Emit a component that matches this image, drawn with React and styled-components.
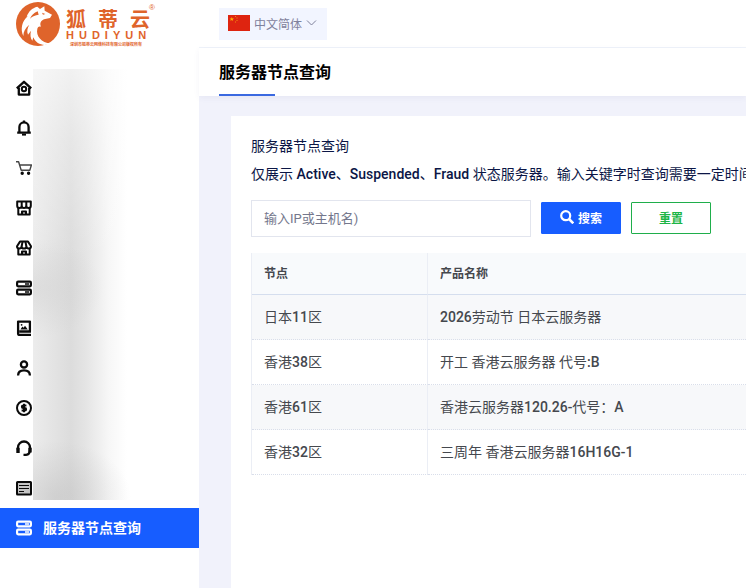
import React from "react";
import styled, { createGlobalStyle } from "styled-components";

const Global = createGlobalStyle`
  * { box-sizing: border-box; }
  body {
    margin: 0;
    background: #f1f2fb;
    font-family: "Roboto Medium", Roboto, "Noto Sans CJK SC", sans-serif;
    font-size: 14px;
    color: #45484e;
    overflow-x: hidden;
  }
  h1, h2, p { margin: 0; }
  button, input { font-family: inherit; }
`;

const Page = styled.div`
  display: grid;
  grid-template-columns: 199px minmax(0, 1fr);
  min-height: 100vh;
`;

const Sidebar = styled.aside`
  background: #fff;
`;

const Brand = styled.a`
  display: flex;
  align-items: flex-start;
  gap: 5px;
  height: 68px;
  padding: 1px 0 0 15px;
  color: #df642b;
  text-decoration: none;
`;

const BrandText = styled.span`
  display: flex;
  flex-direction: column;
  padding-top: 7px;
`;

const BrandName = styled.span`
  font: 700 20px/21px "Noto Sans CJK SC", sans-serif;
  white-space: nowrap;
`;

const Glyph = styled.span`
  &:not(:first-child) { margin-left: ${(p) => p.$gap}px; }
`;

const BrandLatin = styled.span`
  font: 700 11px/12px "Liberation Sans", sans-serif;
  white-space: nowrap;
`;

const BrandNote = styled.span`
  font: 700 4px/6px "Noto Sans CJK SC", sans-serif;
  padding-left: 4px;
  white-space: nowrap;
`;

const Registered = styled.sup`
  font: 400 8px/8px "Liberation Sans", sans-serif;
  margin-left: -6px;
  padding-top: 3px;
`;

const Nav = styled.nav`
  position: relative;
`;

const NavLink = styled.a`
  display: flex;
  align-items: center;
  gap: 11px;
  height: 40px;
  padding: 0 16px;
  font-size: 14px;
  line-height: 20px;
  font-weight: 700;
  text-decoration: none;
  color: ${(p) => (p.$active ? "#fff" : "#0a0a0a")};
  background: ${(p) => (p.$active ? "#175dff" : "transparent")};
`;

const Veil = styled.div`
  position: absolute;
  top: 1px;
  bottom: 48px;
  left: 33px;
  width: 100px;
  background:
    linear-gradient(to bottom, rgba(255, 255, 255, 0.6), rgba(255, 255, 255, 0.3) 70px, rgba(255, 255, 255, 0) 190px),
    radial-gradient(70px 50px at 0 219px, rgba(190, 190, 190, 0.3), rgba(200, 200, 200, 0)),
    radial-gradient(76px 56px at 22px 428px, rgba(180, 180, 180, 0.4), rgba(200, 200, 200, 0)),
    linear-gradient(to right, #ececec, #dcdcdc 38px, #e4e4e4 52px, #f7f7f7 76px, #fff 94px);
`;

const Main = styled.main`
  display: flex;
  flex-direction: column;
  min-width: 0;
`;

const TopBar = styled.header`
  height: 48px;
  padding: 8px 20px;
  background: #fff;
  border-bottom: 1px solid #eff3fa;
`;

const LanguageButton = styled.button`
  display: flex;
  align-items: center;
  gap: 4px;
  height: 32px;
  padding: 0 10px 2px 9px;
  border: 0;
  background: #f2f5ff;
  color: #7f819c;
  font-size: 12px;
`;

const TitleBar = styled.div`
  display: flex;
  height: 48px;
  padding: 0 20px;
  background: #fff;
  box-shadow: 0 2px 6px rgba(60, 70, 130, 0.06);
`;

const PageTitle = styled.h1`
  position: relative;
  font-size: 16px;
  line-height: 50px;
  height: 48px;
  font-weight: 700;
  color: #000;
  &::after {
    content: "";
    position: absolute;
    left: 0;
    bottom: 0;
    width: 50%;
    height: 2px;
    background: #3b69e0;
  }
`;

const Card = styled.section`
  flex: 1;
  margin: 20px 0 0 32px;
  padding: 16px 0 20px 20px;
  background: #fff;
  overflow: hidden;
`;

const Lead = styled.p`
  font-size: 14px;
  font-weight: 400;
  line-height: 28px;
  white-space: nowrap;
  color: #0b1646;
`;

const SearchForm = styled.form`
  display: flex;
  align-items: flex-start;
  gap: 10px;
  padding: 12px 0 16px;
`;

const SearchInput = styled.input`
  width: 280px;
  height: 37px;
  padding: 0 12px;
  border: 1px solid #e2e5ee;
  background: #fff;
  font-family: Roboto, "Noto Sans CJK SC", sans-serif;
  font-size: 13px;
  color: #45484e;
  &::placeholder { color: #74778c; opacity: 1; }
`;

const Button = styled.button`
  display: flex;
  align-items: center;
  justify-content: center;
  gap: 4px;
  width: 80px;
  height: 32px;
  margin-top: 2px;
  padding: 0 0 2px;
  border: 1px solid ${(p) => (p.$primary ? "#175dff" : "#1fae4b")};
  border-radius: 1px;
  background: ${(p) => (p.$primary ? "#175dff" : "#fff")};
  color: ${(p) => (p.$primary ? "#fff" : "#1db546")};
  font-size: 12px;
  font-weight: 700;
`;

const Table = styled.table`
  width: 100%;
  table-layout: fixed;
  border-collapse: separate;
  border-spacing: 0;
  border-left: 1px solid #ebeef5;
  text-align: left;
`;

const HeadCell = styled.th`
  width: ${(p) => p.$width || "auto"};
  height: 42px;
  padding: 0 12px 2px;
  background: #f8fafc;
  border-right: 1px solid #ebeef5;
  border-bottom: 1px solid #d5deee;
  font-size: 12px;
  font-weight: 700;
  &:last-child { border-right: 0; }
`;

const Row = styled.tr`
  background: #fff;
  &:nth-child(odd) { background: #f7f8fa; }
`;

const Cell = styled.td`
  height: 45px;
  padding: 0 12px 2px;
  border-right: 1px solid #ebeef5;
  border-bottom: 1px dotted #d9deea;
  white-space: nowrap;
  &:last-child { border-right: 0; }
`;

const Icon = ({ children, stroke = 2.3 }) => (
  <svg width="16" height="16" viewBox="0 0 16 16" fill="none" stroke="currentColor"
    strokeWidth={stroke} strokeLinejoin="round" aria-hidden="true">
    {children}
  </svg>
);

const ServerIcon = () => (
  <Icon stroke={2.2}>
    <rect x="1.1" y="1.7" width="13.8" height="4.6" rx="1" />
    <rect x="1.1" y="9.7" width="13.8" height="4.6" rx="1" />
    <path d="M9 4h4M9 12h4" strokeWidth="1.6" />
  </Icon>
);

const navItems = [
  { label: "首页", icon: (
    <Icon>
      <path d="M.8 8.4 8 1.8 15.2 8.4" />
      <path d="M2.8 7.4v7.2h10.4V7.4" />
      <circle cx="8" cy="9" r="2.2" strokeWidth="2" />
    </Icon>
  ) },
  { label: "通知", icon: (
    <Icon>
      <path d="M1.2 12.6h13.6M3.4 12V7a4.6 4.6 0 0 1 9.2 0v5" />
      <path d="M6 14.6h4" strokeWidth="2" />
      <path d="M8 .5v2" />
    </Icon>
  ) },
  { label: "购物车", icon: (
    <Icon stroke={1.4}>
      <path d="M0 1.8h2.6l2.6 8.4h8.6L15.4 5H3.8" stroke="#444" />
      <circle cx="6.2" cy="13.2" r="1" fill="currentColor" />
      <circle cx="12.6" cy="13.2" r="1" fill="currentColor" />
    </Icon>
  ) },
  { label: "产品", icon: (
    <Icon stroke={2}>
      <path d="M1.2 1.6h13.6v4.2a2.2 2.2 0 0 1-4.5 0 2.2 2.2 0 0 1-4.6 0 2.2 2.2 0 0 1-4.5 0z" />
      <path d="M5.7 1.6v4M10.3 1.6v4M2.3 8v6.6h11.4V8M6 14.5v-3h4v3" />
    </Icon>
  ) },
  { label: "商店", icon: (
    <Icon stroke={2}>
      <path d="M4 1.6h8l3 4.6a2.2 2.2 0 0 1-4.6 0 2.2 2.2 0 0 1-4.8 0 2.2 2.2 0 0 1-4.6 0z" />
      <path d="M6.6 1.6 5.7 6M9.4 1.6l.9 4.4M2.3 8.4v6.2h11.4V8.4M6 14.5v-3h4v3" />
    </Icon>
  ) },
  { label: "服务器", icon: <ServerIcon /> },
  { label: "镜像", icon: (
    <Icon>
      <path d="M15 11.5H3.4M15 15H3.2A1.4 1.4 0 0 1 2.1 13.6V1.6h11.8v10" />
      <path d="m4.4 9.4 2-2.8 1.2 1.2L9 5.8l2.8 3.6z" fill="currentColor" stroke="none" />
      <circle cx="5.6" cy="4.8" r=".9" fill="currentColor" stroke="none" />
    </Icon>
  ) },
  { label: "账户", icon: (
    <Icon>
      <circle cx="8" cy="4.4" r="3.1" />
      <path d="M2.1 15.6c0-3.4 2-5.2 5.9-5.2s5.9 1.8 5.9 5.2" />
    </Icon>
  ) },
  { label: "财务", icon: (
    <Icon stroke={2}>
      <circle cx="8" cy="8" r="7" />
      <path d="M10.4 5.6H7.1a1.2 1.2 0 0 0 0 2.4h1.8a1.2 1.2 0 0 1 0 2.4H5.6M8 3.8v8.4" />
    </Icon>
  ) },
  { label: "支持", icon: (
    <Icon>
      <path d="M2 10V7.5a6 6 0 0 1 12 0V10c0 3-1.5 4.7-4.5 4.9H7.5" />
      <path d="M2 7.8V13M14 7.8V12.4" strokeWidth="3.4" />
    </Icon>
  ) },
  { label: "公告", icon: (
    <Icon stroke={2}>
      <rect x="1" y="2" width="14" height="12.6" rx=".5" fill="#c4c4c4" />
      <path d="M3 5.5h10M3 8.5h10M3 11.5h5" strokeWidth="1" />
    </Icon>
  ) },
];

const rows = [
  ["日本11区", "2026劳动节 日本云服务器"],
  ["香港38区", "开工 香港云服务器 代号:B"],
  ["香港61区", "香港云服务器120.26-代号：A"],
  ["香港32区", "三周年 香港云服务器16H16G-1"],
];

const FoxLogo = () => (
  <svg width="46" height="46" viewBox="45 3 138 138" aria-hidden="true">
    <circle cx="114" cy="72" r="66" fill="#df642b" />
    <path fill="#fff" d="M156 44 150 54 132 58C121 63 119 72 123 80 117 78 114 80 112 86 107 108 124 128 152 130 134 140 108 134 100 112L97 122C91 114 90 104 93 92L84 104C80 94 82 84 88 74 76 84 70 94 70 108 60 88 66 62 84 48L80 50C86 34 96 24 112 20L120 27 133 19 134 32z" />
    <path fill="#df642b" d="M113 34C102 38 94 46 90 56 98 48 106 45 116 44zM126 38l10 4-7 2z" />
  </svg>
);

export default function App() {
  return (
    <>
      <Global />
      <Page>
        <Sidebar>
          <Brand href="#" aria-label="狐蒂云">
            <FoxLogo />
            <BrandText>
              <BrandName>{[..."狐蒂云"].map((c, i) => <Glyph key={i} $gap={12}>{c}</Glyph>)}</BrandName>
              <BrandLatin>{[..."HUDIYUN"].map((c, i) => <Glyph key={i} $gap={5}>{c}</Glyph>)}</BrandLatin>
              <BrandNote>深圳市狐蒂云网络科技有限公司版权所有</BrandNote>
            </BrandText>
            <Registered>®</Registered>
          </Brand>
          <Nav>
            {navItems.map((item) => (
              <NavLink key={item.label} href="#" aria-label={item.label}>{item.icon}</NavLink>
            ))}
            <NavLink href="#" $active aria-current="page"><ServerIcon />服务器节点查询</NavLink>
            <Veil />
          </Nav>
        </Sidebar>
        <Main>
          <TopBar>
            <LanguageButton type="button">
              <svg width="22" height="16" viewBox="0 0 22 16" aria-hidden="true">
                <path fill="#de2410" d="M0 0h22v16H0z" />
                <path fill="#ffb400" d="m3.8 2 .6 1.5H6L4.8 4.500l.4 1.500-1.400-.9L2.400 6l.4-1.500L1.600 3.500h1.600z" />
                <path fill="#f08a10" d="M7 1h1v1H7zM8.500 2.500h1v1h-1zM8.500 5h1v1h-1zM7 6.500h1v1H7z" />
              </svg>
              中文简体
              <svg width="11" height="8" viewBox="0 0 11 8" fill="none" stroke="currentColor" aria-hidden="true">
                <path d="m1 1.500 4.500 4.500L10 1.500" />
              </svg>
            </LanguageButton>
          </TopBar>
          <TitleBar><PageTitle>服务器节点查询</PageTitle></TitleBar>
          <Card>
            <Lead as="h2">服务器节点查询</Lead>
            <Lead>仅展示 Active、Suspended、Fraud 状态服务器。输入关键字时查询需要一定时间</Lead>
            <SearchForm onSubmit={(e) => e.preventDefault()}>
              <SearchInput aria-label="输入IP或主机名" placeholder="输入IP或主机名)" />
              <Button $primary type="submit">
                <svg width="14" height="14" viewBox="0 0 14 14" fill="none" stroke="currentColor" strokeWidth="2.2" aria-hidden="true">
                  <circle cx="5.7" cy="5.7" r="4.5" />
                  <path d="m9 9 4.300 4.300" strokeWidth="2.6" />
                </svg>
                搜索
              </Button>
              <Button type="reset">重置</Button>
            </SearchForm>
            <Table>
              <thead>
                <tr><HeadCell $width="176px">节点</HeadCell><HeadCell>产品名称</HeadCell></tr>
              </thead>
              <tbody>
                {rows.map(([node, product]) => (
                  <Row key={node}><Cell>{node}</Cell><Cell>{product}</Cell></Row>
                ))}
              </tbody>
            </Table>
          </Card>
        </Main>
      </Page>
    </>
  );
}
